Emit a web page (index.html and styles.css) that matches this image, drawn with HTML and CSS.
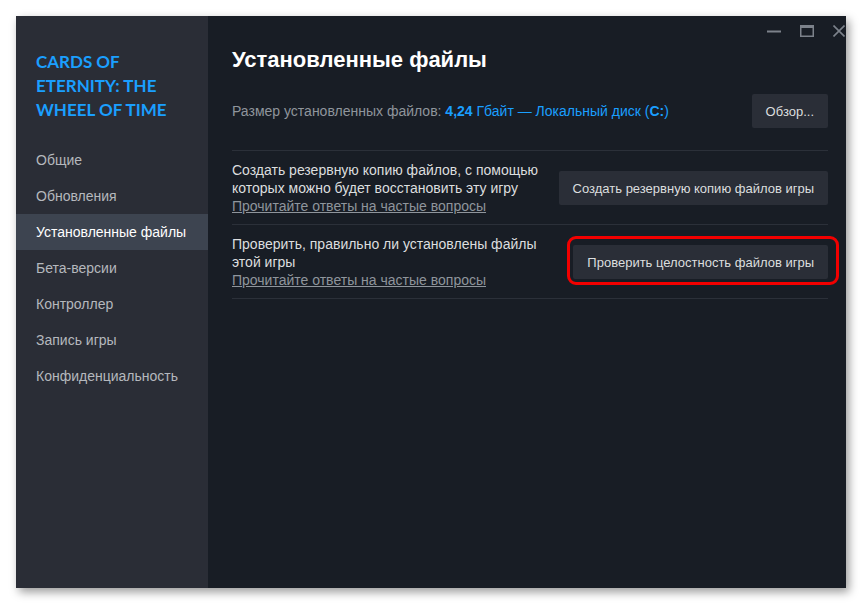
FILE: index.html
```html
<!DOCTYPE html>
<html lang="ru">
<head>
    <meta charset="UTF-8">
    <meta name="viewport" content="width=device-width, initial-scale=1.0">
    <title>Свойства игры</title>
    <link rel="stylesheet" href="styles.css">
</head>
<body>
    <div class="window">
        <aside class="sidebar">
            <div class="game-title">Cards of Eternity: The Wheel of Time</div>
            <nav class="nav">
                <div class="nav-item">Общие</div>
                <div class="nav-item">Обновления</div>
                <div class="nav-item active">Установленные файлы</div>
                <div class="nav-item">Бета-версии</div>
                <div class="nav-item">Контроллер</div>
                <div class="nav-item">Запись игры</div>
                <div class="nav-item">Конфиденциальность</div>
            </nav>
        </aside>

        <main class="content">
            <div class="window-controls">
                <svg width="14" height="14" viewBox="0 0 14 14"><path d="M0 7.5h14" stroke="#7c828b" stroke-width="2"/></svg>
                <svg width="14" height="12" viewBox="0 0 14 12"><rect x="0.75" y="1" width="12.5" height="10.25" fill="none" stroke="#7c828b" stroke-width="1.5"/><path d="M0 1.5h14" stroke="#7c828b" stroke-width="3"/></svg>
                <svg width="12" height="12" viewBox="0 0 12 12"><path d="M0.5 0.5l11 11M11.5 0.5l-11 11" stroke="#7c828b" stroke-width="1.6"/></svg>
            </div>

            <h1>Установленные файлы</h1>

            <div class="size-row">
                <p class="size-info">Размер установленных файлов: <b class="accent">4,24</b> <span class="accent">Гбайт — Локальный диск (<b>C:</b>)</span></p>
                <button class="btn">Обзор...</button>
            </div>

            <div class="option">
                <div class="option-text">
                    <p>Создать резервную копию файлов, с помощью которых можно будет восстановить эту игру</p>
                    <a href="#">Прочитайте ответы на частые вопросы</a>
                </div>
                <button class="btn">Создать резервную копию файлов игры</button>
            </div>

            <div class="option">
                <div class="option-text">
                    <p>Проверить, правильно ли установлены файлы этой игры</p>
                    <a href="#">Прочитайте ответы на частые вопросы</a>
                </div>
                <span class="highlight">
                    <button class="btn">Проверить целостность файлов игры</button>
                </span>
            </div>
        </main>
    </div>
</body>
</html>
```

FILE: styles.css
```css
body {
    margin: 0;
    padding: 0;
    background-color: #ffffff;
    font-family: "Liberation Sans", Arial, sans-serif;
}

.window {
    display: flex;
    width: 830px;
    height: 572px;
    margin: 16px;
    box-shadow: 3px 4px 9px rgba(0, 0, 0, 0.4);
}

.sidebar {
    width: 192px;
    background-color: #2a2d36;
    padding-top: 34px;
}

.game-title {
    padding: 0 20px;
    font-family: Lato, "Open Sans", sans-serif;
    font-weight: bold;
    font-size: 17px;
    line-height: 24px;
    text-transform: uppercase;
    color: #1a9fff;
    margin-bottom: 20px;
}

.nav-item {
    height: 36px;
    line-height: 36px;
    padding-left: 20px;
    font-size: 14px;
    color: #b5b8bd;
}

.nav-item.active {
    background-color: #3d4450;
    color: #ffffff;
}

.content {
    position: relative;
    flex: 1;
    background-color: #181d25;
    padding: 30px 18px 0 24px;
}

.window-controls {
    position: absolute;
    top: 8px;
    right: 1px;
    display: flex;
    align-items: center;
    gap: 19px;
}

h1 {
    margin: 0;
    font-size: 22px;
    line-height: 28px;
    font-weight: bold;
    color: #ffffff;
}

.size-row {
    display: flex;
    justify-content: space-between;
    align-items: center;
    margin-top: 20px;
    padding-bottom: 22px;
    border-bottom: 1px solid #2b3039;
}

.size-info {
    margin: 0;
    font-size: 14px;
    color: #8f959c;
}

.accent {
    color: #1a9fff;
}

.btn {
    font-family: "Liberation Sans", Arial, sans-serif;
    font-size: 13px;
    color: #dcdedf;
    background-color: #2a2e37;
    border: none;
    border-radius: 2px;
    height: 34px;
    padding: 0 14px;
}

.option {
    display: flex;
    justify-content: space-between;
    align-items: center;
    padding: 10px 0 9px;
    border-bottom: 1px solid #2b3039;
}

.option-text {
    width: 312px;
    font-size: 14px;
    line-height: 18px;
}

.option-text p {
    margin: 0;
    color: #dcdedf;
}

.option-text a {
    color: #8f959c;
    text-decoration: underline;
}

.highlight {
    position: relative;
    display: inline-block;
}

.highlight .btn {
    display: block;
}

.highlight::after {
    content: "";
    position: absolute;
    top: -9px;
    left: -6px;
    right: -11px;
    bottom: -6px;
    border: 3px solid #f20000;
    border-radius: 9px;
}
```
